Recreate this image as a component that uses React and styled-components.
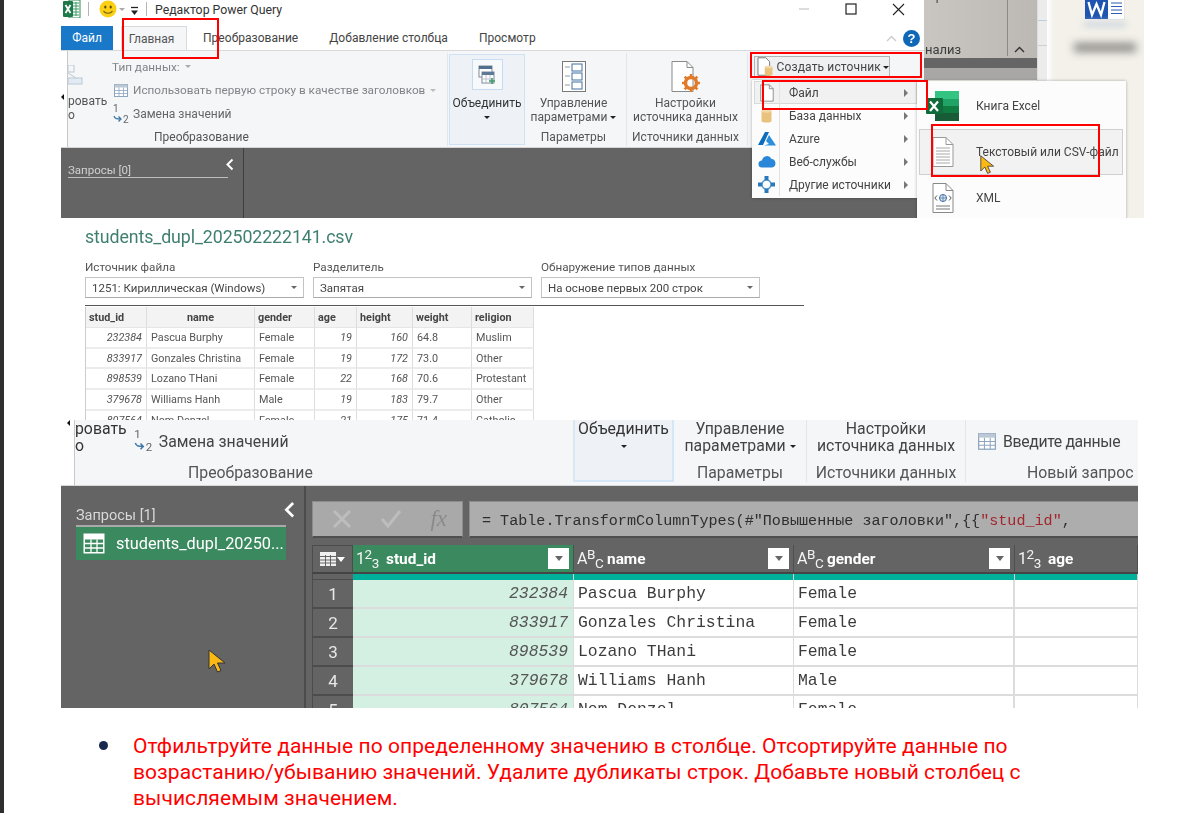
import React from "react";
import styled, { createGlobalStyle } from "styled-components";

const Global = createGlobalStyle`
  html, body { margin: 0; padding: 0; background: #fff; }
  body { font-family: Roboto, "Noto Sans", sans-serif; overflow: hidden; }
`;

const Page = styled.div`
  width: 1193px; height: 813px; box-sizing: border-box; overflow: hidden;
  border-left: 4px solid #2e2e2e; padding-left: 57px; background: #fff;
`;

/* ---------- Figure 1 ---------- */
const FigureOne = styled.section`
  position: relative; display: flex; width: 1083px; height: 218px; overflow: hidden; filter: blur(0.3px);
`;
const PQWindow = styled.div`
  width: 863px; flex: none; display: flex; flex-direction: column; background: #fff; color: #444;
  font-size: 12px;
`;
const TitleBar = styled.div`
  height: 26px; display: flex; align-items: flex-start; padding-left: 2px; box-sizing: border-box;
`;
const TitleSep = styled.span`
  width: 1px; height: 14px; margin: 2px ${p => p.$mr}px 0 7px; background: #b5b5b5;
`;
const CaretGap = styled.span`
  width: 5px; flex: none;
`;
const TitleText = styled.span`
  font-size: 12.3px; line-height: 21px; color: #333;
`;
const WindowControls = styled.div`
  margin-left: auto; display: flex; align-items: flex-start; gap: ${p => p.$gap || 35}px; padding-right: 19px;
`;
const TabRow = styled.div`
  height: 24px; display: flex; align-items: stretch; border-bottom: 1px solid #d6d8da; box-sizing: content-box;
`;
const FileTab = styled.div`
  width: 52px; background: #1a78c9; color: #fff; display: flex; align-items: center; justify-content: center; font-size: 12px;
`;
const HomeTab = styled.div`
  width: 66px; margin-left: 8px; box-sizing: border-box; background: #f4f6f8; border: 1px solid #dadada; border-bottom: 0; padding-right: 5px;
  display: flex; align-items: center; justify-content: center; font-size: 12px; color: #555;
`;
const TextTabs = styled.div`
  margin-left: 16px; display: flex; gap: 31px; align-items: center; font-size: 12px; color: #444; letter-spacing: 0.03px;
`;
const TabRight = styled.div`
  margin-left: auto; display: flex; align-items: center; gap: 6px; padding-right: 4px;
`;
const HelpDot = styled.span`
  width: 17px; height: 17px; border-radius: 50%; background: #0f67b8; color: #fff; font: bold 13px/17px "Liberation Sans", sans-serif; text-align: center;
`;
const Ribbon = styled.div`
  height: 96px; display: flex; background: #f4f6f8; border-bottom: 1px solid #d4d4d4;
`;
const RibbonEdge = styled.div`
  width: 6px; background: #fff; border-right: 1px solid #c8c8c8; flex: none;
`;
const Group = styled.div`
  width: ${p => p.$w}px; flex: none; display: flex; flex-direction: column; box-sizing: border-box; position: relative;
  margin: ${p => (p.$flush ? 0 : 2)}px 0 1px; border-right: ${p => (p.$noSep ? "0" : "1px solid #e3e6e9")};
`;
const GroupBody = styled.div`
  flex: 1; display: flex; min-height: 0;
`;
const GroupLabel = styled.div`
  height: 18px; line-height: 18px; text-align: ${p => (p.$start ? "left" : "center")};
  padding-left: ${p => p.$start || 0}px; padding-right: ${p => p.$shift || 0}px; font-size: 12px; color: #555; white-space: nowrap;
`;
const CutButton = styled.div`
  width: 44px; display: flex; flex-direction: column; font-size: 12px; line-height: 14px; color: #555; flex: none;
`;
const CutIcon = styled.div`
  height: 41px; padding-top: 12px; box-sizing: border-box;
`;
const SmallCol = styled.div`
  display: flex; flex-direction: column; padding-top: 2px;
`;
const SmallItem = styled.div`
  height: 23.5px; display: flex; align-items: center; gap: ${p => p.$gap ?? 5}px; color: #808488; font-size: 11.75px; white-space: nowrap;
  padding-left: ${p => p.$indent || 0}px;
`;
const ReplaceText = styled.span`
  color: #666; font-size: 12px;
`;
const Caret = styled.span`
  display: inline-block; width: 0; height: 0; border-left: 3px solid transparent; border-right: 3px solid transparent;
  border-top: 3px solid ${p => p.$c || "#222"}; margin-left: ${p => p.$ml || 0}px; margin-top: ${p => p.$mt || 0}px; vertical-align: middle;
`;
const MergePanel = styled.div`
  margin: 3px 1px 0 1px; background: #eef2f6; border: 1px solid #cfe2f5; display: flex; flex-direction: column; align-items: center;
  font-size: 12px; color: #333; padding-top: 4px; box-sizing: border-box; height: 91px;
`;
const IconBox = styled.div`
  width: 31px; height: 31px; box-sizing: border-box; background: #f7f9fb; border: 1px solid #c5dcf2; display: flex; align-items: center; justify-content: center;
`;
const MergeText = styled.div`
  margin-top: 6px; line-height: 14px;
`;
const LargeButton = styled.div`
  flex: 1; display: flex; flex-direction: column; align-items: center; font-size: 12px; line-height: 14px; color: #555; white-space: nowrap;
  padding-top: 8px; box-sizing: border-box; padding-right: ${p => p.$shift || 0}px;
`;
const LargeIcon = styled.div`
  height: 35px; display: flex; align-items: flex-start; justify-content: center;
`;
const CreateButton = styled.div`
  margin: 3px 0 0 6px; height: 22px; width: 136px; box-sizing: border-box; border: 1px solid #b4b4b4; background: #eef0f2;
  display: flex; align-items: center; font-size: 12px; color: #444; padding-left: 2px; gap: 2px; white-space: nowrap; letter-spacing: 0.15px;
`;
const DarkPane = styled.div`
  flex: 1; background: #646464; display: flex;
`;
const QueriesStub = styled.div`
  width: 183px; box-sizing: border-box; border-right: 1px solid #3e3e3e; padding: 13px 14px 0 7px; flex: none;
`;
const QueriesHead = styled.div`
  display: flex; justify-content: space-between; align-items: flex-start; border-bottom: 1px solid #bdbdbd;
  height: 16px; color: #d0d0d0; font-size: 11.5px; line-height: 18px; width: 160px; position: relative;
`;
const ChevronAt = styled.span`
  position: absolute; right: -6px; top: -3px;
`;

const Backdrop = styled.div`
  flex: 1; display: flex; background: #f3f1ea;
`;
const GrayPanel = styled.div`
  width: 113px; flex: none; display: flex; flex-direction: column;
`;
const GrayTop = styled.div`
  height: 58px; background: linear-gradient(90deg, #c9c6c1, #bcb8b3); position: relative; color: #3d3d3d; font-size: 13px; overflow: hidden;
`;
const ClippedLine = styled.div`
  position: absolute; left: 2px; top: -11px; font-size: 12px; color: #444;
`;
const AnalysisText = styled.div`
  position: absolute; left: 1px; bottom: 1px;
`;
const GrayDivider = styled.span`
  position: absolute; left: 83px; top: 0; bottom: 2px; width: 1px; background: #8c8a87;
`;
const GrayChevron = styled.span`
  position: absolute; left: 90px; bottom: 2px;
`;
const GrayStrip = styled.div`
  height: 22px; background: #656565; padding: 10px 0 0 0; box-sizing: border-box;
`;
const GrayInner = styled.div`
  height: 100%; background: #a9a7a5;
`;
const ScrollStrip = styled.div`
  width: 10px; flex: none; background: #ececec; border-left: 1px solid #ddd; box-sizing: border-box;
`;
const ScrollMark = styled.div`
  margin-top: 20px; height: 1px; background: #bcd0e4; box-shadow: 0 25px 0 #cfcfcf;
`;
const WhiteFade = styled.div`
  width: 7px; flex: none; background: linear-gradient(90deg, #fff, #f3f1ea);
`;
const DesktopArea = styled.div`
  flex: 1; padding-left: 31px; position: relative;
`;
const BlurLabel = styled.div`
  position: absolute; left: 20px; top: 43px; width: 62px; height: 9px; background: #8e8b88; filter: blur(4px);
`;
const BlurSmall = styled.div`
  position: absolute; left: 30px; top: 22px; width: 42px; height: 5px; background: #cdd5dc; filter: blur(3px);
`;

const Menu = styled.div`
  position: absolute; left: 691px; top: 80px; width: 166px; height: 118px; background: #fcfcfc; box-shadow: 0 0 3px rgba(0,0,0,.3);
  display: flex; flex-direction: column; padding-top: 1px; box-sizing: border-box; z-index: 2; font-size: 12px; color: #444;
`;
const MenuRow = styled.div`
  height: 23px; display: flex; align-items: stretch; flex: none; box-sizing: border-box; margin: 0 1px 0 2px;
  background: ${p => (p.$active ? "#f1f1f1" : "transparent")}; box-shadow: ${p => (p.$active ? "inset 0 0 0 1px #d9d9d9" : "none")};
`;
const MenuIcon = styled.div`
  width: 25px; flex: none; display: flex; align-items: center; justify-content: center; border-right: 1px solid #e2e2e2;
`;
const MenuText = styled.div`
  flex: 1; display: flex; align-items: center; padding-left: 9px; white-space: nowrap;
`;
const RightArrow = styled.span`
  width: 0; height: 0; border-top: 4px solid transparent; border-bottom: 4px solid transparent; border-left: 4px solid #777; margin: auto 9px auto 0;
`;
const SubMenu = styled.div`
  position: absolute; left: 856px; top: 81px; width: 209px; height: 150px; background: #fcfcfc; box-shadow: 0 0 3px rgba(0,0,0,.3);
  padding-top: 2px; box-sizing: border-box; z-index: 3; font-size: 12px; color: #444;
`;
const SubRow = styled.div`
  height: 46px; display: flex; align-items: center; box-sizing: border-box; margin: 0 3px 0 2px;
  background: ${p => (p.$active ? "#f2f2f2" : "transparent")}; border: 1px solid ${p => (p.$active ? "#cfcfcf" : "transparent")};
`;
const SubIcon = styled.div`
  width: 46px; margin-right: 10px; flex: none; display: flex; justify-content: center;
`;
const RedBox = styled.div`
  position: absolute; left: ${p => p.$x}px; top: ${p => p.$y}px; width: ${p => p.$w}px; height: ${p => p.$h}px;
  border: 2px solid #f00; box-sizing: border-box; z-index: 5;
`;
const CursorAt = styled.div`
  position: absolute; left: ${p => p.$x}px; top: ${p => p.$y}px; z-index: 6; line-height: 0;
`;
const StrayMark = styled.span`
  position: absolute; left: ${p => p.$x}px; top: ${p => p.$y}px; width: 0; height: 0; border-top: 3px solid transparent; border-bottom: 3px solid transparent; border-right: 3px solid #111; z-index: 3;
`;

/* ---------- Figure 2 ---------- */
const FigureTwo = styled.section`
  height: 202px; padding-left: 24px; box-sizing: border-box; overflow: hidden; background: #fff; filter: blur(0.3px); color: #444;
`;
const FileTitle = styled.h2`
  margin: 8px 0 0; font: 400 17.8px/22px Roboto, sans-serif; color: #3f7f70; letter-spacing: -0.1px;
`;
const SelectRow = styled.div`
  display: flex; gap: 9px; margin-top: 11px;
`;
const SelectField = styled.div`
  width: 219px; font-size: 11.7px; color: #555;
`;
const SelectLabel = styled.div`
  height: 16px; line-height: 16px;
`;
const SelectBox = styled.div`
  height: 21px; margin-top: 2px; border: 1px solid #c4c4c4; border-bottom-color: #aaa; box-sizing: border-box; padding: 0 6px; display: flex; align-items: center;
  justify-content: space-between; font-size: 11.5px; color: #444;
`;
const PreviewRule = styled.div`
  width: 719px; height: 1px; background: #555; margin-top: 7px;
`;
const PreviewTable = styled.div`
  display: grid; grid-template-columns: 61px 108px 60px 42px 56px 59px 62px; grid-template-rows: 21px; grid-auto-rows: 20.7px; width: 448px; margin-top: 1px;
  border-left: 1px solid #ccc; font-size: 10.8px;
`;
const HeadCell = styled.div`
  background: #f3f3f3; font-weight: 700; color: #444; display: flex; align-items: center; padding: 0 3px; border-right: 1px solid #ddd; border-bottom: 1px solid #e6e6e6;
  justify-content: ${p => (p.$center ? "center" : "flex-start")}; box-sizing: border-box;
`;
const BodyCell = styled.div`
  display: flex; align-items: center; padding: 0 4px; border-right: 1px solid #ddd; border-bottom: 2px solid #ececec; box-sizing: border-box; white-space: nowrap; color: #555;
  justify-content: ${p => (p.$num ? "flex-end" : "flex-start")}; font-style: ${p => (p.$num ? "italic" : "normal")};
`;

/* ---------- Figure 3 ---------- */
const FigureThree = styled.section`
  position: relative; width: 1077px; height: 288px; display: flex; flex-direction: column; overflow: hidden; filter: blur(0.3px);
`;
const RibbonWide = styled.div`
  height: 66px; flex: none; display: flex; background: #f4f6f8; border-bottom: 1px solid #d8d8d8; box-sizing: border-box; color: #4a4a4a; font-size: 15.8px; line-height: 17px;
`;
const WideEdge = styled.div`
  width: 14px; background: #fff; border-right: 1px solid #c8c8c8; flex: none; box-sizing: border-box;
`;
const WideGroup = styled.div`
  width: ${p => p.$w}px; flex: none; display: flex; flex-direction: column; box-sizing: border-box; position: relative;
  border-right: ${p => (p.$noSep ? "0" : "1px solid #e3e6e9")}; margin-bottom: 3px;
`;
const WideBody = styled.div`
  height: 44px; display: flex;
`;
const WideLabel = styled.div`
  height: 18px; line-height: 18px; text-align: ${p => (p.$start ? "left" : "center")}; padding-left: ${p => p.$start || 0}px; white-space: nowrap; color: #555;
`;
const WideCut = styled.div`
  width: 58px; flex: none; color: #333;
`;
const WideCenter = styled.div`
  flex: 1; text-align: center; white-space: nowrap; color: #444;
`;
const WideInline = styled.div`
  display: flex; align-items: center; gap: ${p => p.$gap ?? 5}px; height: 42px; white-space: nowrap; color: #444;
  padding-left: ${p => p.$indent || 0}px; letter-spacing: ${p => p.$track || 0}px;
`;
const MergeWide = styled.div`
  width: 100%; height: 62px; background: #eef2f6; border-right: 2px solid #d5e6f6; border-left: 1px solid #d5e6f6; border-bottom: 2px solid #d5e6f6; text-align: center; color: #333; box-sizing: border-box;
`;
const Workspace = styled.div`
  flex: 1; display: flex; background: #646464; min-height: 0;
`;
const QueryPanel = styled.div`
  width: 245px; flex: none; box-sizing: border-box; border-right: 2px solid #4c4c4c; padding: 20px 18px 0 15px;
`;
const QueryHead = styled.div`
  height: 19px; border-bottom: 2px solid #a9a9a9; color: #d8d8d8; font-size: 14.5px; line-height: 20px; position: relative;
`;
const QueryChevron = styled.span`
  position: absolute; right: -9px; top: -5px; line-height: 0;
`;
const QueryItem = styled.div`
  height: 33px; background: #3b8a5f; color: #fff; display: flex; align-items: center; gap: 11px; padding-left: 7px; font-size: 16.3px; white-space: nowrap; overflow: hidden;
`;
const DataPane = styled.div`
  flex: 1; min-width: 0; padding: 15px 0 0 6px; display: flex; flex-direction: column; gap: 7px;
`;
const FormulaRow = styled.div`
  height: 37px; display: flex; gap: 6px; flex: none;
`;
const FormulaButtons = styled.div`
  width: 151px; flex: none; background: #a9a9a9; border: 1px solid #8c8c8c; border-bottom: 2px solid #4f4f4f; box-sizing: border-box; display: flex; align-items: center; position: relative;
  justify-content: space-between; padding: 0 15px 0 19px;
`;
const FxMark = styled.span`
  font: italic 23px "Liberation Serif", serif; color: #8a8a8a;
`;
const FormulaBar = styled.div`
  flex: 1; background: #adadad; border-top: 1px solid #8c8c8c; border-left: 1px solid #8c8c8c; border-bottom: 2px solid #4f4f4f; box-sizing: border-box; display: flex; align-items: center; padding: 3px 0 0 12px;
  font: 15.1px "Liberation Mono", monospace; color: #2e2e2e; white-space: pre; overflow: hidden;
`;
const FormulaString = styled.span`
  color: #a4262c;
`;
const DataGrid = styled.div`
  flex: 1; min-height: 0; overflow: hidden; display: grid; grid-template-columns: 41px 221px 220px 221px 1fr; grid-template-rows: 29px 6px; grid-auto-rows: 29px;
`;
const CornerCell = styled.div`
  background: #646464; border: 1px solid #4c4c4c; border-bottom: 2px solid #444; box-sizing: border-box; display: flex; align-items: center; justify-content: center; gap: 1px;
`;
const ColHead = styled.div`
  background: ${p => (p.$on ? "#3b8a5f" : "#646464")}; border-bottom: 2px solid #454545; border-right: 1px solid #4f4f4f; box-sizing: border-box; color: #fff; display: flex; align-items: center;
  padding-left: 3px; font-size: 15.4px; font-weight: 700; position: relative;
`;
const TypeGlyph = styled.span`
  font-size: 16px; font-weight: 400; width: 30px; flex: none; white-space: nowrap; color: #f4f4f4; letter-spacing: -0.4px;
`;
const Up = styled.span`
  position: relative; top: -5px; font-size: 13.5px;
`;
const Down = styled.span`
  position: relative; top: 4px; font-size: 13.5px;
`;
const FilterBtn = styled.span`
  position: absolute; right: 4px; top: 3px; width: 21px; height: 21px; background: #fff; display: flex; align-items: center; justify-content: center;
`;
const CornerBar = styled.div`
  background: #646464; border-left: 1px solid #4c4c4c; border-bottom: 1px solid #4c4c4c; box-sizing: border-box;
`;
const TealBar = styled.div`
  background: #00b09b; border-right: 1px solid #d0d0d0; box-sizing: border-box;
`;
const RowNum = styled.div`
  background: #646464; border-left: 1px solid #4c4c4c; border-bottom: 2px solid #4c4c4c; box-sizing: border-box; color: #e8e8e8; font-size: 17px; display: flex; align-items: center; justify-content: center;
`;
const DataCell = styled.div`
  background: ${p => (p.$on ? "#d4f0e2" : "#fff")}; border-bottom: 2px solid #dcdcdc; border-right: ${p => (p.$thick ? 2 : 1)}px solid #dcdcdc; box-sizing: border-box;
  font: ${p => (p.$num ? "italic " : "")}16.4px "Liberation Mono", monospace; color: ${p => (p.$num ? "#555" : "#3c3c3c")}; display: flex; align-items: center; white-space: pre;
  padding: 0 5px 1px 4px; justify-content: ${p => (p.$num ? "flex-end" : "flex-start")};
`;

/* ---------- Bullet ---------- */
const BulletList = styled.ul`
  list-style: none; margin: 25px 0 0; padding: 0 0 0 72px; width: 930px; color: #f00; font-size: 21px; letter-spacing: 0.06px; line-height: 26px; font-family: Roboto, sans-serif;
`;
const BulletItem = styled.li`
  position: relative;
  &::before {
    content: ""; position: absolute; left: -34px; top: 8px; width: 9px; height: 9px; border-radius: 50%; background: #16294f;
  }
`;

/* ---------- Icons ---------- */
const ExcelSmall = () => (
  <svg width="18" height="18" viewBox="0 0 18 18">
    <path d="M6 0h11v18H6z" fill="#fff" stroke="#2f8a57" />
    <path d="M10 3h6M10 6h6M10 9h6M10 12h6M10 15h6M13 2v14" stroke="#3b9a66" />
    <rect y="1" width="10" height="16" rx="1" fill="#1f7a4a" />
    <path d="M2.5 5l5 8M7.5 5l-5 8" stroke="#fff" strokeWidth="1.8" />
  </svg>
);
const Smiley = () => (
  <svg width="18" height="18" viewBox="0 0 18 18">
    <circle cx="9" cy="9" r="8.5" fill="#fbcf14" />
    <ellipse cx="6.3" cy="7" rx="1.1" ry="1.6" fill="#5a4a10" />
    <ellipse cx="11.7" cy="7" rx="1.1" ry="1.6" fill="#5a4a10" />
    <path d="M4.5 11c2 3 7 3 9 0" fill="none" stroke="#6b5a10" strokeWidth="1.2" />
  </svg>
);
const QuickCustom = () => (
  <svg width="9" height="16" viewBox="0 0 9 16"><path d="M1 7.500h7" stroke="#222" strokeWidth="1.3" /><path d="M1 10.500h7L4.500 15z" fill="#222" /></svg>
);
const WinMin = () => (<svg width="12" height="14" viewBox="0 0 12 14"><path d="M1 9h10" stroke="#bbb" /></svg>);
const WinMax = () => (<svg width="12" height="15" viewBox="0 0 12 15"><rect x="1" y="4" width="10" height="10" fill="none" stroke="#222" strokeWidth="1.2" /></svg>);
const WinClose = () => (<svg width="13" height="16" viewBox="0 0 13 16"><path d="M1 4l11 11M12 4L1 15" stroke="#222" strokeWidth="1.1" /></svg>);
const ChevronUp = ({ c = "#ccc" }) => (<svg width="11" height="7" viewBox="0 0 11 7"><path d="M1 6l4.5-4.5L10 6" fill="none" stroke={c} strokeWidth="1.4" /></svg>);
const ChevronLeft = ({ s = 1 }) => (<svg width={9 * s} height={13 * s} viewBox="0 0 9 13"><path d="M7.5 1.5L2.5 6.5l5 5" fill="none" stroke="#fff" strokeWidth="2" /></svg>);
const GridIcon = ({ w = 14, h = 13, c = "#8ea6bf", bg = "#fff", head = "#bcc8d4" }) => (
  <svg width={w} height={h} viewBox="0 0 14 13">
    <rect x=".5" y=".5" width="13" height="12" fill={bg} stroke={c} />
    <rect x=".5" y=".5" width="13" height="3" fill={head} />
    <path d="M.5 6.5h13M.5 9.5h13M5 3.5v9M9.5 3.5v9" stroke={c} strokeWidth=".8" />
  </svg>
);
const ReplaceIcon = ({ s = 1 }) => (
  <svg width={19 * s} height={22 * s} viewBox="0 0 19 22">
    <text x="1" y="9" fontSize="10" fontFamily="Roboto" fill="#666">1</text>
    <path d="M2 13c1 3 3 3 7 3M6.500 13.500L9 16l-2.500 2.500" fill="none" stroke="#3f77a8" strokeWidth="1.3" />
    <text x="11" y="20" fontSize="10" fontFamily="Roboto" fill="#666">2</text>
  </svg>
);
const CutCopyIcon = () => (
  <svg width="15" height="20" viewBox="0 0 15 20">
    <rect x="0" y="0" width="6" height="7" fill="none" stroke="#bcc8d4" />
    <path d="M0 8l8 5" stroke="#bcc8d4" />
    <rect x="0" y="13" width="14" height="6" fill="#e2ebf4" stroke="#bcc8d4" />
  </svg>
);
const MergeIcon = () => (
  <svg width="18" height="20" viewBox="0 0 18 20">
    <rect x="1" y="1" width="13" height="11" fill="#fff" stroke="#7d8c9c" />
    <rect x="1" y="1" width="13" height="3" fill="#4f708f" />
    <rect x="4" y="7" width="12" height="11" fill="#fff" stroke="#7d8c9c" />
    <rect x="4" y="7" width="12" height="3" fill="#5c7a96" />
    <path d="M4 14h12M8 10v8M12 10v8" stroke="#aab4be" strokeWidth=".8" />
    <path d="M14 13v6M11 16h6" stroke="#3f9a6b" strokeWidth="1.6" />
  </svg>
);
const ParamsIcon = () => (
  <svg width="24" height="31" viewBox="0 0 24 31">
    <rect x=".5" y=".5" width="23" height="30" fill="#fff" stroke="#7a7a7a" />
    <path d="M3 6h5M3 15h5M3 24h5" stroke="#9a9a9a" />
    <rect x="10" y="3" width="10" height="7" fill="#fff" stroke="#3f6f9f" />
    <rect x="10" y="12" width="10" height="7" fill="#fff" stroke="#3f6f9f" />
    <rect x="10" y="21" width="10" height="7" fill="#fff" stroke="#3f6f9f" />
  </svg>
);
const PageShape = ({ w = 18, h = 22 }) => (
  <svg width={w} height={h} viewBox="0 0 18 22"><path d="M1 .5h11l5 5v16H1z" fill="#fff" stroke="#777" /><path d="M12 .5v5h5" fill="none" stroke="#777" /></svg>
);
const SourceSettings = () => (
  <svg width="30" height="32" viewBox="0 0 30 32">
    <path d="M1 .5h15l6 6v24H1z" fill="#fff" stroke="#8a8a8a" />
    <path d="M16 .5v6h6" fill="none" stroke="#8a8a8a" />
    <circle cx="20" cy="22" r="5.500" fill="none" stroke="#e07b2a" strokeWidth="3.500" />
    <path d="M20 13v3M20 28v3M11 22h3M26 22h3M13.600 15.600l2 2M24.400 26.400l2 2M26.400 15.600l-2 2M15.600 26.400l-2 2" stroke="#e07b2a" strokeWidth="2.500" />
  </svg>
);
const Cylinder = ({ w = 11, h = 14 }) => (
  <svg width={w} height={h} viewBox="0 0 11 14">
    <path d="M.5 2v10c0 2 10 2 10 0V2z" fill="#e9c27d" />
    <ellipse cx="5.500" cy="2" rx="5" ry="1.700" fill="#f3d9a8" />
  </svg>
);
const CreateIcon = () => (
  <svg width="18" height="20" viewBox="0 0 18 20">
    <path d="M1 .5h8l4 4v14H1z" fill="#fff" stroke="#777" />
    <path d="M8 10v8c0 1.500 8 1.500 8 0v-8z" fill="#e9c27d" />
    <ellipse cx="12" cy="10" rx="4" ry="1.400" fill="#f3d9a8" />
  </svg>
);
const Azure = () => (
  <svg width="18" height="14" viewBox="0 0 18 14">
    <path d="M7 0h4L5 13H0z" fill="#0f6cbd" /><path d="M11 3l7 10.500H6l5-1.500-3-3z" fill="#2a8fdc" />
  </svg>
);
const Cloud = () => (
  <svg width="18" height="13" viewBox="0 0 18 13"><path d="M4 12.500a3.500 3.500 0 010-7 5 5 0 019.500-1.500A4.300 4.300 0 0114 12.500z" fill="#2a86d8" /></svg>
);
const Nodes = () => (
  <svg width="17" height="17" viewBox="0 0 17 17">
    <circle cx="8.500" cy="8.500" r="4.500" fill="none" stroke="#3f8fd0" strokeWidth="1.400" />
    <rect x="6.500" y="0" width="4" height="4" fill="#2a78b8" /><rect x="6.500" y="13" width="4" height="4" fill="#2a78b8" />
    <rect x="0" y="6.500" width="4" height="4" fill="#2a78b8" /><rect x="13" y="6.500" width="4" height="4" fill="#2a78b8" />
  </svg>
);
const ExcelBig = () => (
  <svg width="34" height="30" viewBox="0 0 34 30">
    <path d="M9 0h24v8H9z" fill="#33c481" /><path d="M9 8h12v7H9z" fill="#21a366" /><path d="M21 8h12v7H21z" fill="#21a366" />
    <path d="M9 15h12v7H9z" fill="#107c41" /><path d="M21 15h12v7H21z" fill="#107c41" /><path d="M9 22h24v8H9z" fill="#185c37" />
    <rect y="7" width="17" height="16" rx="1" fill="#0f6b3a" />
    <path d="M4 10.500l8 9.500M12 10.500l-8 9.500" stroke="#fff" strokeWidth="2.200" />
  </svg>
);
const TextFile = () => (
  <svg width="22" height="30" viewBox="0 0 22 30">
    <path d="M1 .5h13l7 7v22H1z" fill="#fff" stroke="#999" /><path d="M14 .5v7h7" fill="none" stroke="#999" />
    <path d="M4 11h14M4 14h14M4 17h14M4 20h14M4 23h14M4 26h14" stroke="#a8a8a8" />
  </svg>
);
const XmlFile = () => (
  <svg width="22" height="30" viewBox="0 0 22 30">
    <path d="M1 .5h13l7 7v22H1z" fill="#fff" stroke="#888" /><path d="M14 .5v7h7" fill="none" stroke="#888" />
    <circle cx="11" cy="15" r="3.500" fill="#d9e6f2" stroke="#3f6f9f" /><path d="M7.500 15h7M11 11.500v7" stroke="#3f6f9f" strokeWidth=".7" />
    <path d="M5 12.500L2.800 15 5 17.500M17 12.500l2.200 2.500L17 17.500" fill="none" stroke="#555" />
    <path d="M4 22h14v2H4zM4 25h14v2H4z" fill="#bbb" />
  </svg>
);
const WordIcon = () => (
  <svg width="40" height="20" viewBox="0 0 40 20">
    <rect x="14" y="-2" width="26" height="22" fill="#fff" stroke="#cfcfcf" />
    <path d="M26 3h11M26 6.500h11M26 10h11M26 13.500h11" stroke="#2b5fb3" strokeWidth="1.200" />
    <rect x="0" y="-2" width="23" height="21" fill="#1f55b0" />
    <path d="M3.500 2l3.500 13 4.500-11 4.500 11 3.500-13" fill="none" stroke="#fff" strokeWidth="2.300" />
  </svg>
);
const Pointer = ({ s = 1 }) => (
  <svg width={18 * s} height={25 * s} viewBox="0 0 18 25">
    <path d="M1 1v19l5-5 3.500 8 3.500-1.500L9.500 14H17z" fill="#fdb913" stroke="#333" strokeWidth="1" />
  </svg>
);
const GridWhite = ({ w = 22, h = 21 }) => (
  <svg width={w} height={h} viewBox="0 0 22 21">
    <rect x=".5" y=".5" width="21" height="20" fill="#fff" />
    <path d="M2 6.500h18v12.500H2z" fill="#3b8a5f" />
    <path d="M2 10.500h18M2 15h18M8 6.500V19M14 6.500V19" stroke="#fff" strokeWidth="1.300" />
  </svg>
);
const CornerGrid = () => (
  <svg width="16" height="14" viewBox="0 0 16 14">
    <rect width="16" height="14" fill="#f0f0f0" /><path d="M0 4.500h16M0 8h16M0 11h16M5.500 3v11M10.500 3v11" stroke="#646464" />
  </svg>
);
const MiniCaret = ({ c = "#fff" }) => (<svg width="8" height="5" viewBox="0 0 8 5"><path d="M0 0h8L4 5z" fill={c} /></svg>);
const XMark = () => (<svg width="20" height="20" viewBox="0 0 20 20"><path d="M2 2l16 16M18 2L2 18" stroke="#bdbdbd" strokeWidth="3" /></svg>);
const CheckMark = () => (<svg width="22" height="18" viewBox="0 0 22 18"><path d="M2 9l6 7L20 1" fill="none" stroke="#bdbdbd" strokeWidth="3" /></svg>);

/* ---------- Data ---------- */
const previewHead = ["stud_id", "name", "gender", "age", "height", "weight", "religion"];
const previewRows = [
  ["232384", "Pascua Burphy", "Female", "19", "160", "64.8", "Muslim"],
  ["833917", "Gonzales Christina", "Female", "19", "172", "73.0", "Other"],
  ["898539", "Lozano THani", "Female", "22", "168", "70.6", "Protestant"],
  ["379678", "Williams Hanh", "Male", "19", "183", "79.7", "Other"],
  ["807564", "Nom Denzel", "Female", "21", "175", "71.4", "Catholic"],
];
const numericCols = [0, 3, 4];
const menuItems = [
  { label: "Файл", icon: <PageShape w={14} h={18} />, active: true },
  { label: "База данных", icon: <Cylinder /> },
  { label: "Azure", icon: <Azure /> },
  { label: "Веб-службы", icon: <Cloud /> },
  { label: "Другие источники", icon: <Nodes /> },
];
const gridCols = [
  { name: "stud_id", num: true, on: true },
  { name: "name" },
  { name: "gender" },
];

const Num123 = () => (<TypeGlyph>1<Up>2</Up><Down>3</Down></TypeGlyph>);
const AbcType = () => (<TypeGlyph>A<Up>B</Up><Down>C</Down></TypeGlyph>);

export default function App() {
  return (
    <Page>
      <Global />
      <FigureOne>
        <PQWindow>
          <TitleBar>
            <ExcelSmall />
            <TitleSep $mr={10} />
            <Smiley />
            <Caret $c="#aaa" $ml={2} $mt={8} />
            <CaretGap />
            <QuickCustom />
            <TitleSep $mr={8} />
            <TitleText>Редактор Power Query</TitleText>
            <WindowControls>
              <WinMin />
              <WinMax />
              <WinClose />
            </WindowControls>
          </TitleBar>
          <TabRow>
            <FileTab>Файл</FileTab>
            <HomeTab>Главная</HomeTab>
            <TextTabs>
              <span>Преобразование</span>
              <span>Добавление столбца</span>
              <span>Просмотр</span>
            </TextTabs>
            <TabRight>
              <ChevronUp />
              <HelpDot>?</HelpDot>
            </TabRight>
          </TabRow>
          <Ribbon>
            <RibbonEdge />
            <Group $w={380}>
              <GroupBody>
                <CutButton>
                  <CutIcon><CutCopyIcon /></CutIcon>
                  <span>ровать</span>
                  <span>о</span>
                </CutButton>
                <SmallCol>
                  <SmallItem>Тип данных: <Caret $c="#aaa" /></SmallItem>
                  <SmallItem $indent={2}><GridIcon />Использовать первую строку в качестве заголовков <Caret $c="#bbb" /></SmallItem>
                  <SmallItem $gap={2}><ReplaceIcon /><ReplaceText>Замена значений</ReplaceText></SmallItem>
                </SmallCol>
              </GroupBody>
              <GroupLabel $start={86}>Преобразование</GroupLabel>
            </Group>
            <Group $w={78} $noSep $flush>
              <MergePanel>
                <IconBox><MergeIcon /></IconBox>
                <MergeText>Объединить</MergeText>
                <Caret $mt={6} />
              </MergePanel>
            </Group>
            <Group $w={101}>
              <GroupBody>
                <LargeButton $shift={5}>
                  <LargeIcon><ParamsIcon /></LargeIcon>
                  <span>Управление</span>
                  <span>параметрами <Caret /></span>
                </LargeButton>
              </GroupBody>
              <GroupLabel $shift={5}>Параметры</GroupLabel>
            </Group>
            <Group $w={121}>
              <GroupBody>
                <LargeButton $shift={3}>
                  <LargeIcon><SourceSettings /></LargeIcon>
                  <span>Настройки</span>
                  <span>источника данных</span>
                </LargeButton>
              </GroupBody>
              <GroupLabel $shift={3}>Источники данных</GroupLabel>
            </Group>
            <Group $w={170} $noSep>
              <CreateButton><CreateIcon />Создать источник <Caret /></CreateButton>
            </Group>
          </Ribbon>
          <DarkPane>
            <QueriesStub>
              <QueriesHead>
                Запросы [0]
                <ChevronAt><ChevronLeft /></ChevronAt>
              </QueriesHead>
            </QueriesStub>
          </DarkPane>
        </PQWindow>
        <Backdrop>
          <GrayPanel>
            <GrayTop>
              <ClippedLine>о решении</ClippedLine>
              <AnalysisText>нализ</AnalysisText>
              <GrayDivider />
              <GrayChevron><ChevronUp c="#333" /></GrayChevron>
            </GrayTop>
            <GrayStrip><GrayInner /></GrayStrip>
          </GrayPanel>
          <ScrollStrip><ScrollMark /></ScrollStrip>
          <WhiteFade />
          <DesktopArea>
            <WordIcon />
            <BlurSmall />
            <BlurLabel />
          </DesktopArea>
        </Backdrop>
        <StrayMark $x={0} $y={94} />
        <Menu>
          {menuItems.map(m => (
            <MenuRow key={m.label} $active={m.active}>
              <MenuIcon>{m.icon}</MenuIcon>
              <MenuText>{m.label}</MenuText>
              <RightArrow />
            </MenuRow>
          ))}
        </Menu>
        <SubMenu>
          <SubRow><SubIcon><ExcelBig /></SubIcon>Книга Excel</SubRow>
          <SubRow $active><SubIcon><TextFile /></SubIcon>Текстовый или CSV-файл</SubRow>
          <SubRow><SubIcon><XmlFile /></SubIcon>XML</SubRow>
        </SubMenu>
        <RedBox $x={61} $y={18} $w={97} $h={41} />
        <RedBox $x={689} $y={52} $w={172} $h={26} />
        <RedBox $x={701} $y={80} $w={166} $h={30} />
        <RedBox $x={870} $y={124} $w={169} $h={53} />
        <CursorAt $x={919} $y={155}><Pointer s={0.8} /></CursorAt>
      </FigureOne>

      <FigureTwo>
        <FileTitle>students_dupl_202502222141.csv</FileTitle>
        <SelectRow>
          <SelectField>
            <SelectLabel>Источник файла</SelectLabel>
            <SelectBox>1251: Кириллическая (Windows)<Caret $c="#666" /></SelectBox>
          </SelectField>
          <SelectField>
            <SelectLabel>Разделитель</SelectLabel>
            <SelectBox>Запятая<Caret $c="#666" /></SelectBox>
          </SelectField>
          <SelectField>
            <SelectLabel>Обнаружение типов данных</SelectLabel>
            <SelectBox>На основе первых 200 строк<Caret $c="#666" /></SelectBox>
          </SelectField>
        </SelectRow>
        <PreviewRule />
        <PreviewTable>
          {previewHead.map((h, i) => <HeadCell key={h} $center={i === 1}>{h}</HeadCell>)}
          {previewRows.flatMap((r, ri) => r.map((c, ci) => (
            <BodyCell key={`${ri}-${ci}`} $num={numericCols.includes(ci)}>{c}</BodyCell>
          )))}
        </PreviewTable>
      </FigureTwo>

      <FigureThree>
        <StrayMark $x={6} $y={0} />
        <RibbonWide>
          <WideEdge />
          <WideGroup $w={499}>
            <WideBody>
              <WideCut>ровать<br />о</WideCut>
              <WideInline $gap={4}><ReplaceIcon s={1.15} />Замена значений</WideInline>
            </WideBody>
            <WideLabel $start={113}>Преобразование</WideLabel>
          </WideGroup>
          <WideGroup $w={100} $noSep>
            <MergeWide>Объединить<br /><Caret /></MergeWide>
          </WideGroup>
          <WideGroup $w={133}>
            <WideBody><WideCenter>Управление<br />параметрами <Caret /></WideCenter></WideBody>
            <WideLabel>Параметры</WideLabel>
          </WideGroup>
          <WideGroup $w={159}>
            <WideBody><WideCenter>Настройки<br />источника данных</WideCenter></WideBody>
            <WideLabel>Источники данных</WideLabel>
          </WideGroup>
          <WideGroup $w={172} $noSep>
            <WideBody><WideInline $indent={12} $gap={7} $track={-0.35}><GridIcon w={18} h={17} />Введите данные</WideInline></WideBody>
            <WideLabel $start={61}>Новый запрос</WideLabel>
          </WideGroup>
        </RibbonWide>
        <Workspace>
          <QueryPanel>
            <QueryHead>
              Запросы [1]
              <QueryChevron><ChevronLeft s={1.35} /></QueryChevron>
            </QueryHead>
            <QueryItem><GridWhite />students_dupl_20250...</QueryItem>
            <CursorAt $x={147} $y={229}><Pointer /></CursorAt>
          </QueryPanel>
          <DataPane>
            <FormulaRow>
              <FormulaButtons>
                <XMark />
                <CheckMark />
                <FxMark>fx</FxMark>
              </FormulaButtons>
              <FormulaBar>
                {'= Table.TransformColumnTypes(#"Повышенные заголовки",{{'}
                <FormulaString>"stud_id"</FormulaString>,
              </FormulaBar>
            </FormulaRow>
            <DataGrid>
              <CornerCell><CornerGrid /><MiniCaret /></CornerCell>
              {gridCols.map(c => (
                <ColHead key={c.name} $on={c.on}>
                  {c.num ? <Num123 /> : <AbcType />}
                  {c.name}
                  <FilterBtn><MiniCaret c="#666" /></FilterBtn>
                </ColHead>
              ))}
              <ColHead><Num123 />age</ColHead>
              <CornerBar />
              <TealBar /><TealBar /><TealBar /><TealBar />
              {previewRows.map((r, i) => (
                <React.Fragment key={r[0]}>
                  <RowNum>{i + 1}</RowNum>
                  <DataCell $on $num>{r[0]}</DataCell>
                  <DataCell>{r[1]}</DataCell>
                  <DataCell $thick>{r[2]}</DataCell>
                  <DataCell />
                </React.Fragment>
              ))}
            </DataGrid>
          </DataPane>
        </Workspace>
      </FigureThree>

      <BulletList>
        <BulletItem>Отфильтруйте данные по определенному значению в столбце. Отсортируйте данные по возрастанию/убыванию значений. Удалите дубликаты строк. Добавьте новый столбец с вычисляемым значением.</BulletItem>
      </BulletList>
    </Page>
  );
}
